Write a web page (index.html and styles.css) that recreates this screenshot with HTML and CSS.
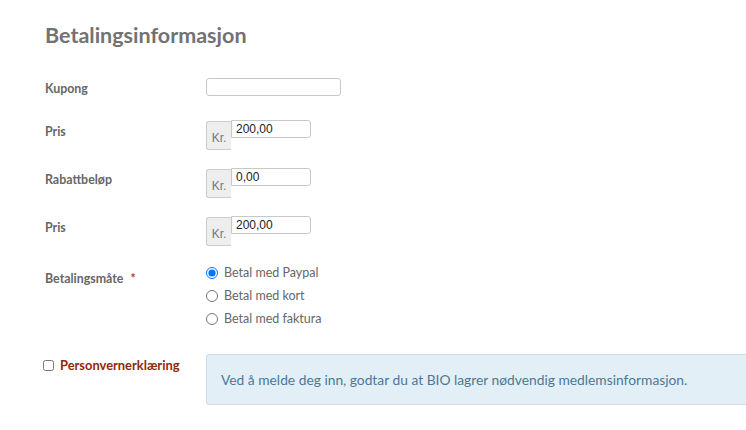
FILE: index.html
```html
<!DOCTYPE html>
<html lang="no">
<head>
<meta charset="UTF-8">
<title>Betalingsinformasjon</title>
<link rel="stylesheet" href="styles.css">
</head>
<body>
  <h1>Betalingsinformasjon</h1>
  <div class="form">
    <div class="row row-coupon">
      <label for="kupong">Kupong</label>
      <input type="text" id="kupong" class="field field-wide">
    </div>
    <div class="row">
      <label>Pris</label>
      <div class="group">
        <span class="addon">Kr.</span>
        <input type="text" class="field" value="200,00">
      </div>
    </div>
    <div class="row">
      <label>Rabattbeløp</label>
      <div class="group">
        <span class="addon">Kr.</span>
        <input type="text" class="field" value="0,00">
      </div>
    </div>
    <div class="row">
      <label>Pris</label>
      <div class="group">
        <span class="addon">Kr.</span>
        <input type="text" class="field" value="200,00">
      </div>
    </div>
    <div class="row row-pay">
      <label>Betalingsmåte <span class="req">*</span></label>
      <div class="options">
        <label class="option"><input type="radio" name="pay" checked> Betal med Paypal</label>
        <label class="option"><input type="radio" name="pay"> Betal med kort</label>
        <label class="option"><input type="radio" name="pay"> Betal med faktura</label>
      </div>
    </div>
    <div class="row row-privacy">
      <label class="consent"><input type="checkbox"> Personvernerklæring</label>
      <div class="alert">Ved å melde deg inn, godtar du at BIO lagrer nødvendig medlemsinformasjon.</div>
    </div>
  </div>
</body>
</html>
```

FILE: styles.css
```css
html, body {
  overflow-x: hidden;
}
body {
  font-family: Lato, "Open Sans", sans-serif;
  background-color: #fff;
  color: #666;
  margin: 0;
  padding: 0 0 0 45px;
}
h1 {
  font-size: 21.5px;
  font-weight: bold;
  color: #727272;
  margin: 0;
  padding-top: 22px;
  line-height: 26px;
}
.form {
  margin-top: 30px;
}
.row {
  display: grid;
  grid-template-columns: 161px auto;
  align-items: start;
  margin-bottom: 19px;
}
.row > label {
  font-size: 12.4px;
  font-weight: bold;
  color: #666;
  padding-top: 3px;
}
.row-coupon {
  margin-bottom: 25px;
}
.field {
  font-family: "Liberation Sans", Arial, sans-serif;
  font-size: 12px;
  color: #222;
  height: 18px;
  width: 80px;
  padding: 0 4px;
  border: 1px solid #c8c8c8;
  border-radius: 3px;
  box-sizing: border-box;
  margin: 0;
}
.field-wide {
  width: 135px;
}
.group {
  display: flex;
  align-items: flex-start;
}
.group .field {
  border-radius: 0 3px 3px 0;
  margin-top: -1px;
  padding-top: 0;
}
.addon {
  display: flex;
  align-items: flex-end;
  justify-content: center;
  width: 25px;
  height: 29px;
  box-sizing: border-box;
  padding-bottom: 4px;
  background-color: #eee;
  border: 1px solid #ccc;
  border-right: none;
  border-radius: 3px 0 0 3px;
  font-family: "Liberation Sans", Arial, sans-serif;
  font-size: 12px;
  color: #777;
}
.row-pay {
  margin-bottom: 31px;
}
.row-pay > label {
  padding-top: 6px;
}
.req {
  color: #c0392b;
  margin-left: 4px;
}
.options {
  display: flex;
  flex-direction: column;
  gap: 8px;
}
.option {
  font-size: 12.5px;
  color: #666;
  display: flex;
  align-items: center;
  gap: 6px;
}
.option input {
  margin: 0;
  width: 12px;
  height: 12px;
}
.row-privacy > label.consent {
  font-size: 12.9px;
  color: #8b2a0e;
  margin-left: -2px;
  display: flex;
  align-items: center;
  gap: 6px;
  padding-top: 0;
}
.consent input {
  margin: 0;
  width: 11px;
  height: 11px;
}
.alert {
  width: 580px;
  margin-top: -3px;
  padding: 16px 14px 16px;
  background-color: #e3eff6;
  border: 1px solid #cbdde9;
  border-radius: 3px;
  font-size: 13.8px;
  color: #4a7896;
}
```
